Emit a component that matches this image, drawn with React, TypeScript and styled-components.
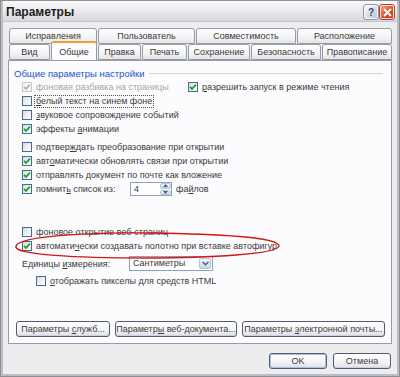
import React from "react";
import styled, { createGlobalStyle } from "styled-components";

const Global = createGlobalStyle`
  html, body { margin: 0; padding: 0; background: #fff; }
  body { font-family: "Liberation Sans", Arial, sans-serif; font-size: 9px; color: #3a3a3a; }
  * { box-sizing: border-box; }
`;

const Window = styled.div`
  position: relative;
  width: 400px;
  height: 377px;
  background: #edecef;
  border: 3px solid #bdbdc5;
  border-top: none;
  display: flex;
  flex-direction: column;
  outline: 1px solid #8e8e96;
  outline-offset: -1px;
  overflow: hidden;
`;

const TitleBar = styled.div`
  height: 22px;
  margin: 0 -3px;
  padding: 0 6px 0 6px;
  display: flex;
  align-items: center;
  background: linear-gradient(#fbfbfc, #e9e9ec 55%, #d6d6dc);
  border-bottom: 1px solid #c4c4cc;
  border-top-left-radius: 6px;
  border-top-right-radius: 6px;
`;

const Title = styled.div`
  flex: 1;
  font-size: 12px;
  font-weight: bold;
  color: #1e1e1e;
  padding-top: 2px;
`;

const TitleButton = styled.div<{ $close?: boolean }>`
  width: 14px;
  height: 14px;
  margin-left: 2px;
  margin-top: 3px;
  border-radius: 2px;
  border: 1px solid ${(p) => (p.$close ? "#f3e6e2" : "#f6f7f9")};
  outline: 1px solid ${(p) => (p.$close ? "#b24228" : "#8a95a6")};
  background: ${(p) =>
    p.$close
      ? "linear-gradient(135deg, #f3a186, #e0502e 55%, #c9381a)"
      : "linear-gradient(135deg, #ffffff, #d4dbe5 60%, #b9c3d2)"};
  display: flex;
  align-items: center;
  justify-content: center;
  font-size: 10px;
  font-weight: bold;
  color: #3b4a62;
`;

const Body = styled.div`
  flex: 1;
  display: flex;
  flex-direction: column;
  padding: 6px 2px 0 5px;
`;

const TabRow = styled.div<{ $front?: boolean }>`
  display: flex;
  height: 16px;
  padding-left: 1px;
  position: relative;
  z-index: ${(p) => (p.$front ? 2 : 1)};
`;

const Tab = styled.div<{ $w: number; $active?: boolean }>`
  width: ${(p) => p.$w}px;
  height: ${(p) => (p.$active ? 19 : 16)}px;
  margin-top: ${(p) => (p.$active ? -3 : 0)}px;
  margin-left: 1px;
  display: flex;
  align-items: center;
  justify-content: center;
  font-size: 9px;
  color: #3a3a3a;
  border: 1px solid #959ca6;
  border-bottom: ${(p) => (p.$active ? "none" : "1px solid #959ca6")};
  border-top: ${(p) => (p.$active ? "2px solid #f0a030" : "1px solid #959ca6")};
  border-radius: 3px 3px 0 0;
  background: ${(p) =>
    p.$active ? "#fcfcfe" : "linear-gradient(#ffffff, #f4f4f5 60%, #e4e4e8)"};
  &:first-child { margin-left: 0; }
`;

const Panel = styled.div`
  height: 284px;
  width: 384px;
  border: 1px solid #959ca6;
  background: #fcfcfe;
  display: flex;
  flex-direction: column;
  padding-top: 6px;
  position: relative;
  z-index: 1;
`;

const GroupHeader = styled.div`
  display: flex;
  align-items: center;
  height: 12px;
  padding: 0 8px 0 5px;
  color: #1f52c9;
  font-size: 9.5px;
`;

const GroupLine = styled.div`
  flex: 1;
  height: 1px;
  margin-left: 5px;
  background: #d4d4c8;
`;

const Options = styled.div`
  display: flex;
  flex-direction: column;
  padding-left: 13px;
`;

const Row = styled.div<{ $top?: number; $indent?: number; $h?: number }>`
  display: flex;
  align-items: center;
  height: ${(p) => p.$h ?? 14}px;
  margin-top: ${(p) => p.$top ?? 0}px;
  padding-left: ${(p) => p.$indent ?? 0}px;
`;

const Option = styled.label<{ $w?: number; $disabled?: boolean }>`
  display: flex;
  align-items: center;
  gap: 2px;
  width: ${(p) => (p.$w ? `${p.$w}px` : "auto")};
  color: ${(p) => (p.$disabled ? "#a7a7a2" : "#3a3a3a")};
  white-space: nowrap;
  font-size: 9px;
`;

const Text = styled.span<{ $focus?: boolean; $w?: number }>`
  padding: 0 1px;
  line-height: 11px;
  border: 1px ${(p) => (p.$focus ? "dotted #555" : "solid transparent")};
  width: ${(p) => (p.$w ? `${p.$w}px` : "auto")};
`;

const U = styled.span`
  text-decoration: underline;
`;

const Box = styled.span<{ $disabled?: boolean }>`
  width: 10px;
  height: 10px;
  flex: none;
  border: 1px solid ${(p) => (p.$disabled ? "#c9c9c2" : "#3f6c98")};
  background: ${(p) =>
    p.$disabled ? "#f7f7f4" : "linear-gradient(135deg, #dcdcd6, #f6f6f3 70%, #ffffff)"};
  display: flex;
  align-items: center;
  justify-content: center;
`;

const Label = styled.span<{ $w: number }>`
  width: ${(p) => p.$w}px;
  white-space: nowrap;
  font-size: 9px;
`;

const Spinner = styled.div`
  display: flex;
  height: 14px;
  width: 42px;
  border: 1px solid #8aa2bf;
  background: #fff;
`;

const SpinValue = styled.div`
  flex: 1;
  padding-left: 3px;
  line-height: 12px;
  font-size: 9px;
`;

const SpinButtons = styled.div`
  width: 12px;
  display: flex;
  flex-direction: column;
  gap: 1px;
  padding: 0 0 0 1px;
`;

const SpinHalf = styled.div`
  flex: 1;
  border-radius: 2px;
  border: 1px solid #b6c4d8;
  background: linear-gradient(#f4f7fb, #cdd8e8);
  display: flex;
  align-items: center;
  justify-content: center;
`;

const After = styled.span`
  margin-left: 4px;
  font-size: 9px;
`;

const Select = styled.div`
  width: 84px;
  height: 15px;
  border: 1px solid #8aa2bf;
  background: #fff;
  display: flex;
  align-items: stretch;
`;

const SelectValue = styled.div`
  flex: 1;
  padding-left: 3px;
  line-height: 13px;
  font-size: 9px;
`;

const SelectArrow = styled.div`
  width: 12px;
  margin: 1px;
  border-radius: 2px;
  border: 1px solid #b6c4d8;
  background: linear-gradient(#f4f7fb, #cdd8e8);
  display: flex;
  align-items: center;
  justify-content: center;
`;

const ButtonRow = styled.div`
  display: flex;
  margin-top: 33px;
  padding-left: 7px;
  gap: 5px;
`;

const Button = styled.div<{ $w: number; $default?: boolean }>`
  width: ${(p) => p.$w}px;
  height: 16px;
  border: 1px solid #4d5d73;
  border-radius: 3px;
  background: linear-gradient(#ffffff, #f3f3f5 60%, #dfdfe4);
  box-shadow: ${(p) => (p.$default ? "inset 0 0 0 1px #aebfe0" : "inset 0 -1px 0 #cfd0d6")};
  display: flex;
  align-items: center;
  justify-content: center;
  font-size: 9px;
  color: #3a3a3a;
  white-space: nowrap;
`;

const Footer = styled.div`
  display: flex;
  justify-content: flex-end;
  gap: 6px;
  margin-top: 9px;
  padding-right: 4px;
`;

const Overlay = styled.svg`
  position: absolute;
  left: -3px;
  top: 0;
  pointer-events: none;
  z-index: 5;
`;

const CheckMark = ({ disabled }: { disabled?: boolean }) => (
  <svg width="8" height="8" viewBox="0 0 8 8">
    <path
      d="M1 3.8 L3 5.9 L7 1.6"
      fill="none"
      stroke={disabled ? "#b3b3ac" : "#21a121"}
      strokeWidth="1.7"
    />
  </svg>
);

const Check = ({ checked, disabled }: { checked?: boolean; disabled?: boolean }) => (
  <Box $disabled={disabled}>{checked && <CheckMark disabled={disabled} />}</Box>
);

const backTabs = [
  { t: "Исправления", w: 88 },
  { t: "Пользователь", w: 97 },
  { t: "Совместимость", w: 100 },
  { t: "Расположение", w: 95 },
];

const frontTabs = [
  { t: "Вид", w: 41 },
  { t: "Общие", w: 46, active: true },
  { t: "Правка", w: 43 },
  { t: "Печать", w: 45 },
  { t: "Сохранение", w: 62 },
  { t: "Безопасность", w: 70 },
  { t: "Правописание", w: 70 },
];

export default function App() {
  return (
    <>
      <Global />
      <Window>
        <TitleBar>
          <Title>Параметры</Title>
          <TitleButton>?</TitleButton>
          <TitleButton $close>
            <svg width="9" height="9" viewBox="0 0 9 9">
              <path d="M1 1 L8 8 M8 1 L1 8" stroke="#fff" strokeWidth="1.8" />
            </svg>
          </TitleButton>
        </TitleBar>
        <Body>
          <TabRow>
            {backTabs.map((b) => (
              <Tab key={b.t} $w={b.w}>
                {b.t}
              </Tab>
            ))}
          </TabRow>
          <TabRow $front>
            {frontTabs.map((b) => (
              <Tab key={b.t} $w={b.w} $active={b.active}>
                {b.t}
              </Tab>
            ))}
          </TabRow>
          <Panel>
            <GroupHeader>
              Общие параметры настройки
              <GroupLine />
            </GroupHeader>
            <Options>
              <Row $top={1}>
                <Option $w={166} $disabled>
                  <Check checked disabled />
                  <Text>фоновая разбивка на страницы</Text>
                </Option>
                <Option>
                  <Check checked />
                  <Text>
                    <U>р</U>азрешить запуск в режиме чтения
                  </Text>
                </Option>
              </Row>
              <Row>
                <Option>
                  <Check />
                  <Text $focus>
                    <U>б</U>елый текст на синем фоне
                  </Text>
                </Option>
              </Row>
              <Row>
                <Option>
                  <Check />
                  <Text>
                    <U>з</U>вуковое сопровождение событий
                  </Text>
                </Option>
              </Row>
              <Row>
                <Option>
                  <Check checked />
                  <Text>
                    эффекты <U>а</U>нимации
                  </Text>
                </Option>
              </Row>
              <Row $top={4}>
                <Option>
                  <Check />
                  <Text>
                    подтвер<U>ж</U>дать преобразование при открытии
                  </Text>
                </Option>
              </Row>
              <Row>
                <Option>
                  <Check checked />
                  <Text>
                    авт<U>о</U>матически обновлять связи при открытии
                  </Text>
                </Option>
              </Row>
              <Row>
                <Option>
                  <Check checked />
                  <Text>отправлять документ по почте как вложение</Text>
                </Option>
              </Row>
              <Row>
                <Option>
                  <Check checked />
                  <Text $w={96}>
                    помнит<U>ь</U> список из:
                  </Text>
                </Option>
                <Spinner>
                  <SpinValue>4</SpinValue>
                  <SpinButtons>
                    <SpinHalf>
                      <svg width="5" height="3" viewBox="0 0 5 3">
                        <path d="M0 3 L2.5 0 L5 3Z" fill="#4d6185" />
                      </svg>
                    </SpinHalf>
                    <SpinHalf>
                      <svg width="5" height="3" viewBox="0 0 5 3">
                        <path d="M0 0 L2.5 3 L5 0Z" fill="#4d6185" />
                      </svg>
                    </SpinHalf>
                  </SpinButtons>
                </Spinner>
                <After>
                  фа<U>й</U>лов
                </After>
              </Row>
              <Row $top={29}>
                <Option>
                  <Check />
                  <Text>фоновое открытие веб-страниц</Text>
                </Option>
              </Row>
              <Row>
                <Option>
                  <Check checked />
                  <Text>
                    автомати<U>ч</U>ески создавать полотно при вставке автофигур
                  </Text>
                </Option>
              </Row>
              <Row $top={3} $h={15} $indent={0}>
                <Label $w={107}>
                  Единицы <U>и</U>змерения:
                </Label>
                <Select>
                  <SelectValue>Сантиметры</SelectValue>
                  <SelectArrow>
                    <svg width="7" height="5" viewBox="0 0 7 5">
                      <path d="M0.5 0.8 L3.5 3.8 L6.5 0.8" fill="none" stroke="#4d6185" strokeWidth="1.5" />
                    </svg>
                  </SelectArrow>
                </Select>
              </Row>
              <Row $top={3} $indent={14}>
                <Option>
                  <Check />
                  <Text>
                    <U>о</U>тображать пикселы для средств HTML
                  </Text>
                </Option>
              </Row>
            </Options>
            <ButtonRow>
              <Button $w={94}>
                <span>
                  Параметры <U>с</U>лужб...
                </span>
              </Button>
              <Button $w={122}>
                <span>
                  Параметр<U>ы</U> веб-документа...
                </span>
              </Button>
              <Button $w={143}>
                <span>
                  Параметры <U>э</U>лектронной почты...
                </span>
              </Button>
            </ButtonRow>
          </Panel>
          <Footer>
            <Button $w={58} $default>
              OK
            </Button>
            <Button $w={58}>Отмена</Button>
          </Footer>
        </Body>
        <Overlay width="400" height="377" viewBox="0 0 400 377">
          <path
            d="M16 246 C 20 236, 90 232, 150 233 C 215 234, 280 237, 279 246 C 278 254, 210 258, 145 258 C 80 258, 12 255, 16 246 Z"
            fill="none"
            stroke="#d41414"
            strokeWidth="1.4"
          />
        </Overlay>
      </Window>
    </>
  );
}
